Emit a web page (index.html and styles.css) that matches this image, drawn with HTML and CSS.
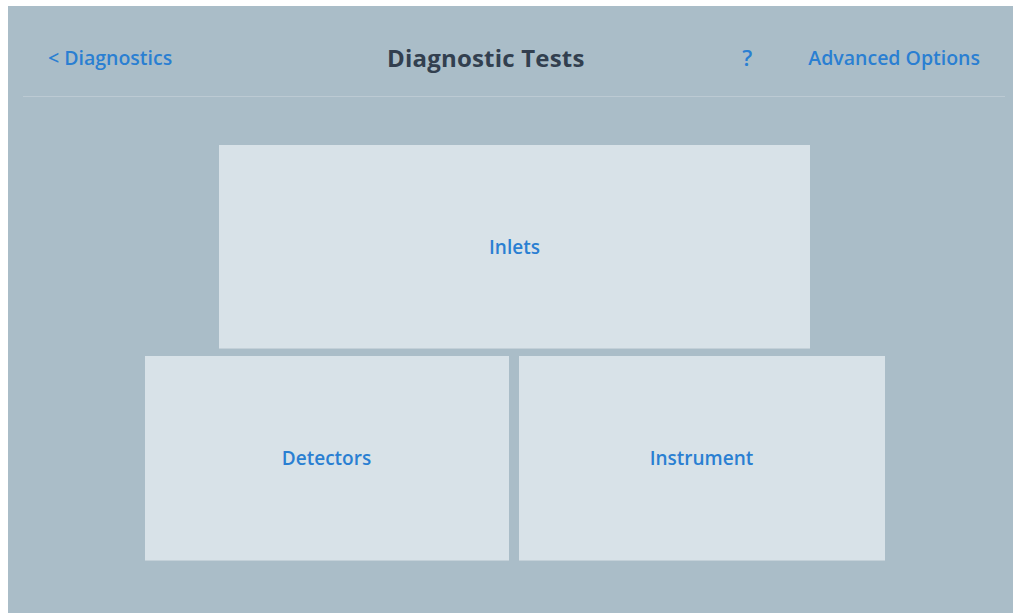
FILE: index.html
```html
<!DOCTYPE html>
<html lang="en">
<head>
    <meta charset="UTF-8">
    <meta name="viewport" content="width=device-width, initial-scale=1.0">
    <title>Diagnostic Tests</title>
    <link rel="stylesheet" href="styles.css">
</head>
<body>
<div class="screen">
    <div class="header">
        <a class="back" href="#">&lt; Diagnostics</a>
        <h1 class="title">Diagnostic Tests</h1>
        <span class="spacer"></span>
        <a class="help" href="#">?</a>
        <a class="advanced" href="#">Advanced Options</a>
    </div>

    <div class="tiles">
        <div class="row">
            <button class="tile tile-wide">Inlets</button>
        </div>
        <div class="row">
            <button class="tile tile-left">Detectors</button>
            <button class="tile tile-right">Instrument</button>
        </div>
    </div>
</div>
</body>
</html>
```

FILE: styles.css
```css
body {
    margin: 0;
    background-color: #ffffff;
    font-family: "Open Sans", "Noto Sans", sans-serif;
}
.screen {
    margin: 6px 0 0 8px;
    height: 607px;
    background-color: #aabdc8;
    overflow: hidden;
}
.header {
    display: flex;
    align-items: center;
    height: 78px;
    padding: 12px 25px 0 25px;
    margin: 0 8px 0 15px;
    border-bottom: 1px solid #bccad3;
}
.header a {
    color: #2a7fd2;
    text-decoration: none;
    font-size: 19.5px;
    font-weight: 600;
}
.back {
    flex: 0 0 339px;
}
.title {
    margin: 0;
    font-size: 24px;
    font-weight: bold;
    color: #323f4f;
    letter-spacing: 0.2px;
}
.spacer {
    flex: 1;
}
.header .help {
    margin-right: 56px;
    font-size: 22px;
}
.tiles {
    display: flex;
    flex-direction: column;
    align-items: center;
    gap: 8px;
    padding: 48px 0 0 8px;
}
.row {
    display: flex;
    gap: 10px;
}
.tile {
    border: none;
    background-color: #d8e2e8;
    color: #2a7fd2;
    font-family: inherit;
    font-size: 19px;
    font-weight: 600;
    box-shadow: 0 1px 0 #c3d0d8;
    cursor: pointer;
}
.tile-wide {
    width: 591px;
    height: 203px;
}
.tile-left {
    width: 364px;
    height: 204px;
}
.tile-right {
    width: 366px;
    height: 204px;
}
```
